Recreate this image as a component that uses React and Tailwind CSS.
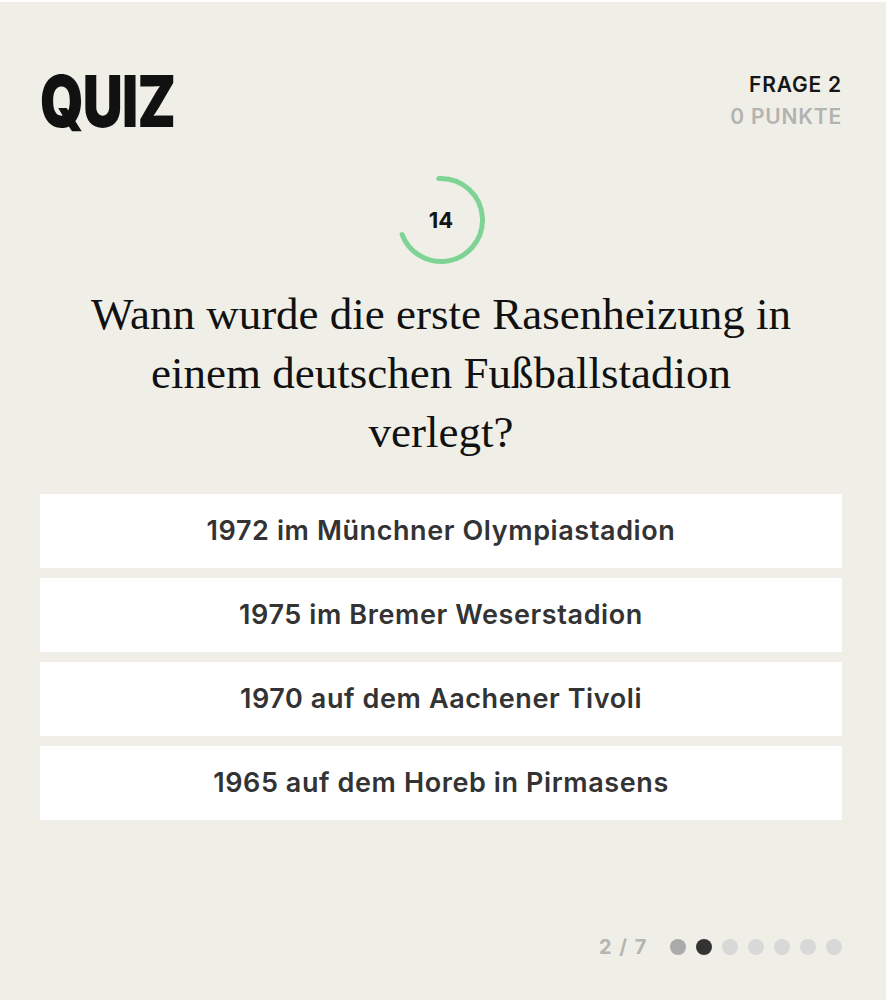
const answers = [
  '1972 im Münchner Olympiastadion',
  '1975 im Bremer Weserstadion',
  '1970 auf dem Aachener Tivoli',
  '1965 auf dem Horeb in Pirmasens',
];

const TOTAL = 7;
const CURRENT = 2;

function Timer({ seconds = 14, max = 20 }) {
  const r = 41.5;
  const c = 2 * Math.PI * r;
  const filled = (seconds / max) * c;
  return (
    <div className="relative mx-auto h-[90px] w-[90px]">
      <svg width="90" height="90" viewBox="0 0 90 90" className="absolute inset-0">
        <circle
          cx="45"
          cy="45"
          r={r}
          fill="none"
          stroke="#7fd495"
          strokeWidth="5"
          strokeLinecap="round"
          strokeDasharray={`${filled} ${c}`}
          transform="rotate(-93 45 45)"
        />
      </svg>
      <div className="absolute inset-0 flex items-center justify-center text-[22px] font-bold text-[#151515]">
        {seconds}
      </div>
    </div>
  );
}

export default function App() {
  return (
    <div className="min-h-[1000px] bg-white pt-[2px] font-['Inter',sans-serif]">
      <div className="flex h-[998px] w-[886px] flex-col bg-[#efefe7] pl-10 pr-[44px]">
        <header className="flex items-start justify-between pt-[59px]">
          <h1 className="origin-left scale-x-[0.77] text-[72px] font-black leading-[80px] tracking-[-1px] text-[#111]">
            QUIZ
          </h1>
          <div className="mt-[8px] text-right text-[21px] font-semibold uppercase leading-[32px] tracking-[0.8px]">
            <p className="text-[#161616]">Frage {CURRENT}</p>
            <p className="text-[#b3b3b0]">0 Punkte</p>
          </div>
        </header>

        <div className="mt-[34px]">
          <Timer />
        </div>

        <h2 className="mx-auto mt-[20px] max-w-[720px] text-center font-['Liberation_Serif',serif] text-[45px] leading-[59px] text-[#111]">
          Wann wurde die erste Rasenheizung in einem deutschen Fußballstadion verlegt?
        </h2>

        <ul className="mt-[32px] flex flex-col gap-[10px]">
          {answers.map((a) => (
            <li
              key={a}
              className="flex h-[74px] items-center justify-center bg-white text-[27px] font-semibold tracking-[0.6px] text-[#333]"
            >
              {a}
            </li>
          ))}
        </ul>

        <footer className="mt-auto mb-[38px] flex items-center justify-end gap-[22px]">
          <span className="text-[20px] font-bold tracking-[1.5px] text-[#b5b5b2]">
            {CURRENT} / {TOTAL}
          </span>
          <div className="flex gap-[10px]">
            {Array.from({ length: TOTAL }, (_, i) => (
              <span
                key={i}
                className={
                  i + 1 === CURRENT
                    ? 'h-4 w-4 rounded-full bg-[#333]'
                    : i + 1 < CURRENT
                      ? 'h-4 w-4 rounded-full bg-[#aaaaaa]'
                      : 'h-4 w-4 rounded-full bg-[#d8d8d8]'
                }
              />
            ))}
          </div>
        </footer>
      </div>
    </div>
  );
}
